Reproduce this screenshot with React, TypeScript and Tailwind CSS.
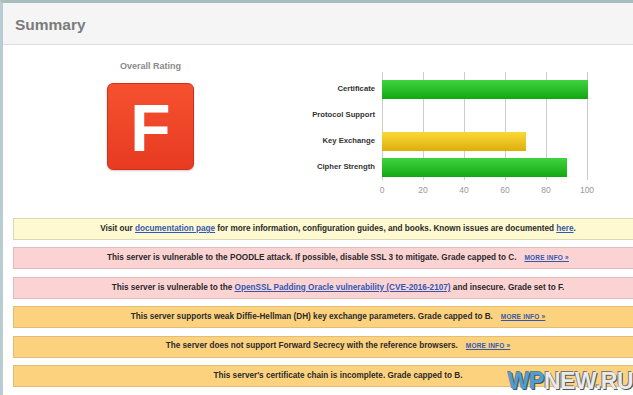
import React from "react";

const bars = [
  { label: "Certificate", value: 100, color: "bg-gradient-to-b from-[#3fd43f] to-[#0ea80e]" },
  { label: "Protocol Support", value: 0, color: "" },
  { label: "Key Exchange", value: 70, color: "bg-gradient-to-b from-[#fad934] to-[#ddae08]" },
  { label: "Cipher Strength", value: 90, color: "bg-gradient-to-b from-[#3fd43f] to-[#0ea80e]" },
];

const ticks = [0, 20, 40, 60, 80, 100];

function MoreInfo() {
  return (
    <a className="ml-[8px] text-[6.5px] font-bold text-[#3457b0] underline tracking-[0.2px]" href="#">
      MORE INFO »
    </a>
  );
}

function Box({ kind, children }: { kind: "info" | "error" | "warn"; children: React.ReactNode }) {
  const styles = {
    info: "bg-[#fef9d0] border-[#dcd8b4]",
    error: "bg-[#fcd3d3] border-[#e2bcbc]",
    warn: "bg-[#fdd27e] border-[#e3bd78]",
  }[kind];
  return (
    <div className={`h-[22px] w-[650px] border flex items-center justify-center text-[8.2px] font-bold text-[#2a2a2a] ${styles}`}>
      <span>{children}</span>
    </div>
  );
}

export default function App() {
  return (
    <div
      className="relative w-[633px] h-[395px] overflow-hidden bg-white"
      style={{ fontFamily: '"Liberation Sans", Arial, sans-serif' }}
    >
      <div className="w-[720px] h-full border-t-[3px] border-l-[3px] border-t-[#a9bdbd] border-l-[#b9ccd2]">
        {/* header */}
        <div className="h-[42px] bg-[#f5f5f5] border-b border-[#dedede] flex items-center pl-[12px] pt-[3px]">
          <h2 className="text-[15.5px] font-bold text-[#7b7b7b]">Summary</h2>
        </div>

        {/* rating + chart */}
        <div className="flex h-[173px]">
          <div className="w-[295px] flex flex-col items-center pt-[15px]">
            <div className="text-[9px] font-bold text-[#8a8a8a] leading-[12px]">Overall Rating</div>
            <div className="mt-[11px] w-[87px] h-[87px] rounded-[6px] bg-gradient-to-b from-[#f5512f] to-[#e83a22] border border-[#d0301a] flex items-center justify-center shadow-[0_1px_2px_rgba(0,0,0,0.2)]">
              <span className="text-[66px] font-bold text-white leading-none mt-[2px]">F</span>
            </div>
          </div>

          <div className="flex pt-[31px]">
            <div className="w-[77px] flex flex-col">
              {bars.map((b) => (
                <div key={b.label} className="h-[26px] flex items-center justify-end text-[7.7px] font-bold text-[#333]">
                  {b.label}
                </div>
              ))}
            </div>
            <div className="ml-[7px]">
              <div className="relative w-[206px] h-[104px]">
                {ticks.map((t) => (
                  <div
                    key={t}
                    className="absolute top-[-4px] bottom-0 w-px bg-[#cccccc]"
                    style={{ left: `${(t / 100) * 205}px` }}
                  />
                ))}
                <div className="relative flex flex-col">
                  {bars.map((b) => (
                    <div key={b.label} className="h-[26px] flex items-center">
                      {b.value > 0 && (
                        <div className={`h-[19px] ${b.color}`} style={{ width: `${(b.value / 100) * 206}px` }} />
                      )}
                    </div>
                  ))}
                </div>
              </div>
              <div className="relative h-[16px]">
                {ticks.map((t) => (
                  <span
                    key={t}
                    className="absolute top-[4px] -translate-x-1/2 text-[8.5px] text-[#999]"
                    style={{ left: `${(t / 100) * 205}px` }}
                  >
                    {t}
                  </span>
                ))}
              </div>
            </div>
          </div>
        </div>

        {/* notices */}
        <div className="ml-[10px] flex flex-col gap-[7.4px]">
          <Box kind="info">
            Visit our{" "}
            <a className="text-[#3458b0] underline" href="#">documentation page</a> for more information,
            configuration guides, and books. Known issues are documented{" "}
            <a className="text-[#3458b0] underline" href="#">here</a>.
          </Box>
          <Box kind="error">
            This server is vulnerable to the POODLE attack. If possible, disable SSL 3 to mitigate. Grade capped to C.
            <MoreInfo />
          </Box>
          <Box kind="error">
            This server is vulnerable to the{" "}
            <a className="text-[#3458b0] underline" href="#">OpenSSL Padding Oracle vulnerability (CVE-2016-2107)</a> and
            insecure. Grade set to F.
          </Box>
          <Box kind="warn">
            This server supports weak Diffie-Hellman (DH) key exchange parameters. Grade capped to B.
            <MoreInfo />
          </Box>
          <Box kind="warn">
            The server does not support Forward Secrecy with the reference browsers.
            <MoreInfo />
          </Box>
          <Box kind="warn">This server's certificate chain is incomplete. Grade capped to B.</Box>
        </div>
      </div>

      {/* watermark */}
      <div className="absolute right-[0px] bottom-[2px] text-[23px] font-bold tracking-[-0.5px] leading-none [text-shadow:1px_1px_0_#555,-1px_-1px_0_#777]">
        <span className="text-[#4a9fd6]">WP</span>
        <span className="text-[#e8eaec]">NEW.RU</span>
      </div>
    </div>
  );
}
